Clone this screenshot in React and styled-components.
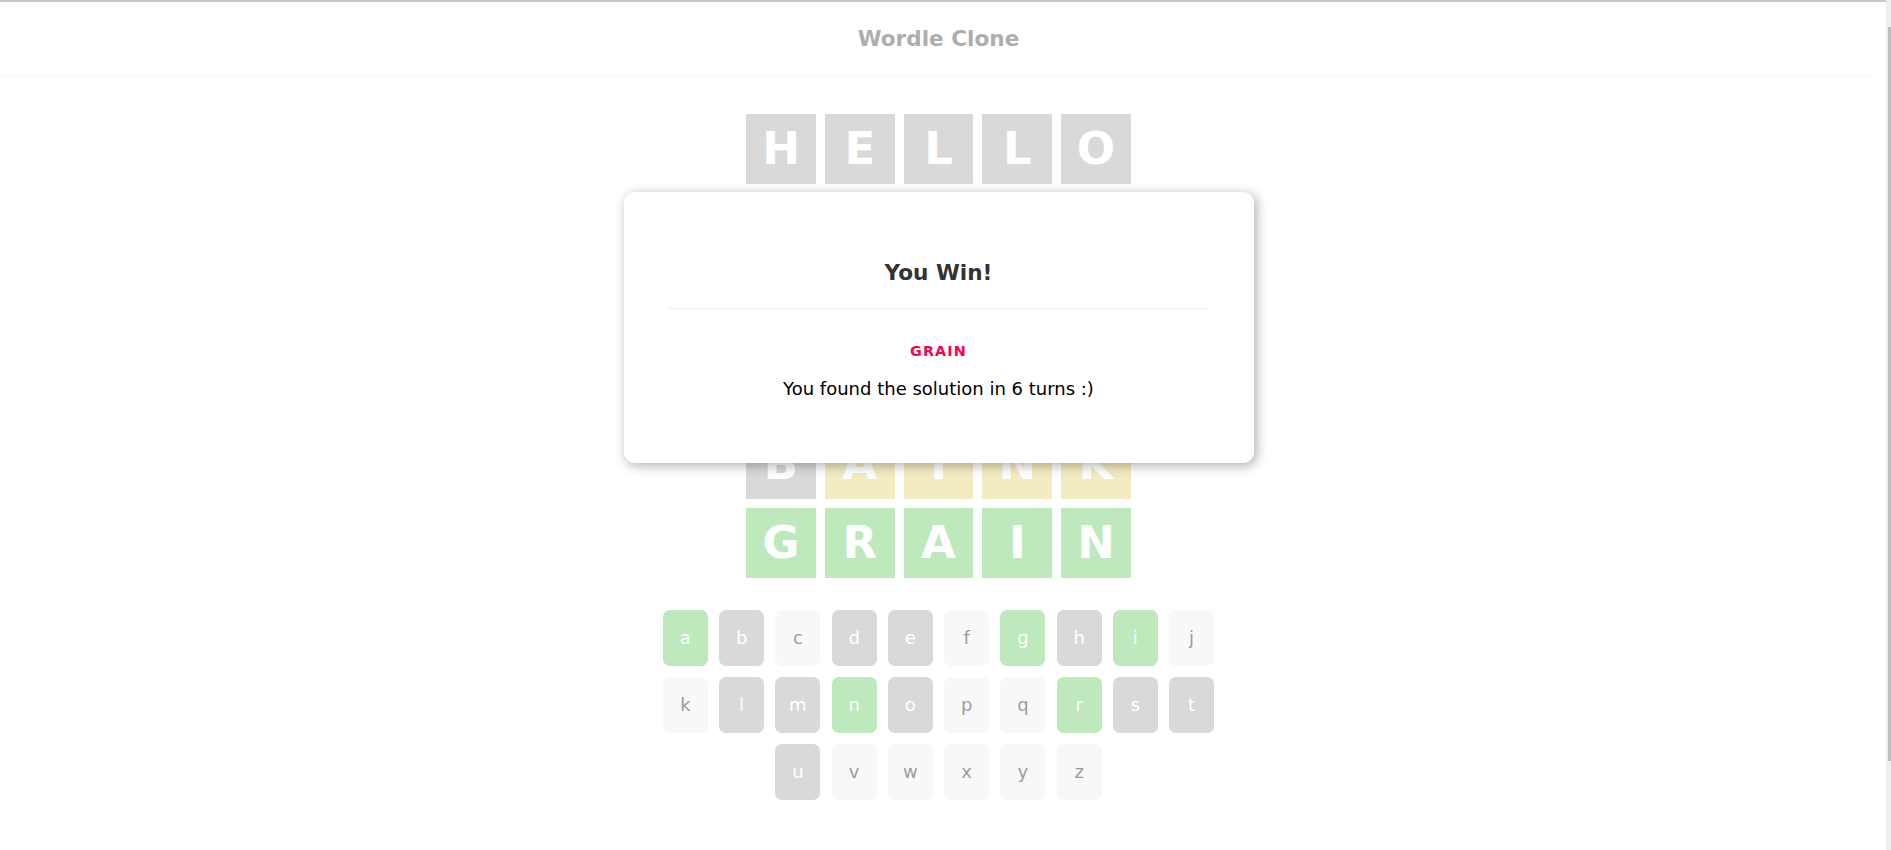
import React from "react";
import styled, { createGlobalStyle } from "styled-components";

const GlobalStyle = createGlobalStyle`
  html, body {
    margin: 0;
    padding: 0;
    height: 100%;
    overflow: hidden;
    background: #fff;
  }
  body {
    font-family: Verdana, "DejaVu Sans", sans-serif;
    font-size: 18px;
    text-align: center;
    color: #000;
  }
  #root { height: 100%; }
`;

const COLORS = {
  green: "#5ac85a",
  grey: "#a1a1a1",
  yellow: "#e2cc68",
  blank: "#eeeeee",
};

const Page = styled.div`
  display: grid;
  grid-template-columns: 1fr 14px;
  height: 100vh;
  overflow: hidden;
`;

const Main = styled.main`
  position: relative;
  border-top: 2px solid #c8c8c8;
  min-height: 0;
  overflow: hidden;
`;

const Title = styled.h1`
  margin: 0 0 33.75px;
  padding: 23px 0;
  font-size: 21.6px;
  line-height: 27px;
  font-weight: bold;
  color: #333;
  border-bottom: 1px solid #eee;
`;

const ModalTitle = styled(Title)`
  padding: 22.5px 0;
  line-height: 26.2px;
`;

const Board = styled.div`
  display: flex;
  flex-direction: column;
`;

const Row = styled.div`
  display: flex;
  justify-content: center;
`;

const Tile = styled.div`
  width: 69.75px;
  height: 69.75px;
  margin: 4.5px;
  box-sizing: border-box;
  background: ${(p) => COLORS[p.$status] || "#fff"};
  color: #fff;
  font-size: 45px;
  font-weight: bold;
  line-height: 69.75px;
  text-transform: uppercase;
`;

const Keypad = styled.div`
  width: 562.5px;
  margin: 22px auto;
  display: flex;
  flex-direction: column;
`;

const KeyRow = styled.div`
  display: flex;
  justify-content: center;
`;

const Key = styled.div`
  width: 45px;
  height: 56px;
  margin: 5.625px;
  border-radius: 6.75px;
  background: ${(p) => COLORS[p.$status] || COLORS.blank};
  color: ${(p) => (p.$status ? "#fff" : "#000")};
  font-size: 18px;
  line-height: 56px;
`;

const Backdrop = styled.div`
  position: absolute;
  inset: 0;
  background: rgba(255, 255, 255, 0.6);
`;

const Modal = styled.div`
  box-sizing: border-box;
  max-width: 630px;
  margin: 190px auto 0;
  padding: 45px;
  background: #fff;
  border-radius: 11px;
  box-shadow: 2.25px 2.25px 11.25px rgba(0, 0, 0, 0.3);
`;

const Solution = styled.p`
  margin: 14.4px 0;
  color: #ff004c;
  font-weight: bold;
  font-size: 14.4px;
  line-height: 17.5px;
  letter-spacing: 1.125px;
  text-transform: uppercase;
`;

const Message = styled.p`
  margin: 18px 0;
  font-size: 18px;
  line-height: 21.9px;
`;

const ScrollGutter = styled.aside`
  display: flex;
  flex-direction: column;
  align-items: flex-end;
  padding-top: 27px;
  box-sizing: border-box;
  background-image: linear-gradient(#c8c8c8, #c8c8c8),
    linear-gradient(to right, #fff 9px, #eeeeee 9px);
  background-size: 9px 2px, 100% 100%;
  background-repeat: no-repeat;
`;

const ScrollThumb = styled.div`
  width: 3px;
  height: 734px;
  background: #bdbdbd;
`;

// rows 2-4 lie fully under the modal; their letters are not visible
const guesses = [
  [["h", "grey"], ["e", "grey"], ["l", "grey"], ["l", "grey"], ["o", "grey"]],
  [["", "grey"], ["", "grey"], ["", "yellow"], ["", "grey"], ["", "grey"]],
  [["", "grey"], ["", "yellow"], ["", "grey"], ["", "grey"], ["", "grey"]],
  [["", "grey"], ["", "grey"], ["", "grey"], ["", "grey"], ["", "grey"]],
  [["b", "grey"], ["a", "yellow"], ["i", "yellow"], ["n", "yellow"], ["k", "yellow"]],
  [["g", "green"], ["r", "green"], ["a", "green"], ["i", "green"], ["n", "green"]],
];

const keyStatus = {
  a: "green", g: "green", i: "green", n: "green", r: "green",
  b: "grey", d: "grey", e: "grey", h: "grey", l: "grey",
  m: "grey", o: "grey", s: "grey", t: "grey", u: "grey",
};

const keyRows = ["abcdefghij", "klmnopqrst", "uvwxyz"];

export default function App() {
  return (
    <>
      <GlobalStyle />
      <Page>
        <Main>
          <Title>Wordle Clone</Title>
          <Board>
            {guesses.map((g, i) => (
              <Row key={i}>
                {g.map(([l, s], j) => (
                  <Tile key={j} $status={s}>
                    {l}
                  </Tile>
                ))}
              </Row>
            ))}
          </Board>
          <Keypad>
            {keyRows.map((r) => (
              <KeyRow key={r}>
                {r.split("").map((l) => (
                  <Key key={l} $status={keyStatus[l]}>
                    {l}
                  </Key>
                ))}
              </KeyRow>
            ))}
          </Keypad>
          <Backdrop>
            <Modal>
              <ModalTitle>You Win!</ModalTitle>
              <Solution>grain</Solution>
              <Message>You found the solution in 6 turns :)</Message>
            </Modal>
          </Backdrop>
        </Main>
        <ScrollGutter>
          <ScrollThumb />
        </ScrollGutter>
      </Page>
    </>
  );
}
